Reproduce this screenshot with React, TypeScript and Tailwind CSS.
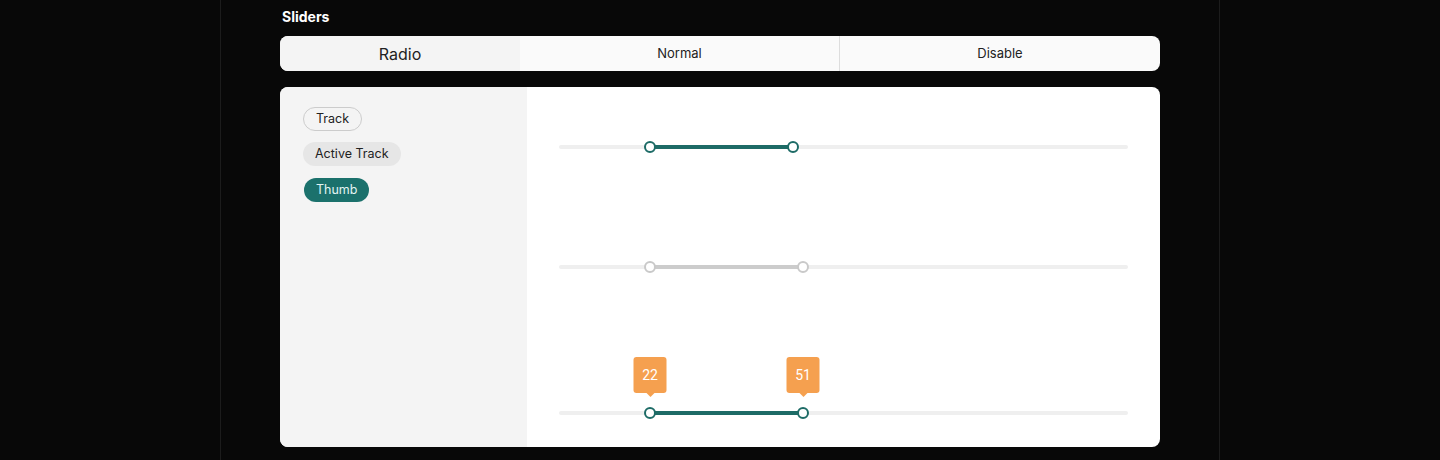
import React from 'react'

const font = { fontFamily: 'Inter, "Noto Sans", sans-serif' }

type Thumb = { pos: string; label?: string }

function Slider({
  from,
  to,
  width,
  disabled,
  labels,
}: {
  from: string
  to: string
  width: string
  disabled?: boolean
  labels?: [string, string]
}) {
  const thumbs: Thumb[] = [
    { pos: from, label: labels?.[0] },
    { pos: to, label: labels?.[1] },
  ]
  return (
    <div className="relative h-1 w-full rounded-full bg-[#efefef]">
      <div
        className={`absolute top-0 h-1 ${disabled ? 'bg-[#cccccc]' : 'bg-[#1d6b66]'}`}
        style={{ left: from, width }}
      />
      {thumbs.map((t, i) => (
        <div key={i} className="absolute top-1/2 -translate-x-1/2 -translate-y-1/2" style={{ left: t.pos }}>
          <div
            className={`h-3 w-3 rounded-full border-2 bg-white ${disabled ? 'border-[#c9c9c9]' : 'border-[#1d6b66]'}`}
          />
          {t.label && (
            <div className="absolute bottom-[22px] left-1/2 -translate-x-1/2">
              <div
                className="flex h-[36px] w-[33px] items-center justify-center rounded-[3px] bg-[#f5a04f] pt-px text-[14px] text-white"
                style={{ fontFamily: 'Roboto, sans-serif' }}
              >
                {t.label}
              </div>
              <div className="mx-auto h-0 w-0 border-x-[4px] border-t-[4px] border-x-transparent border-t-[#f5a04f]" />
            </div>
          )}
        </div>
      ))}
    </div>
  )
}

export default function App() {
  return (
    <div className="min-h-[460px] w-full bg-[#080808]" style={font}>
      <div className="mx-auto min-h-[460px] w-[1000px] border-x border-[#1c1c1c] px-[59px] pt-[7px]">
        <h2 className="ml-[2px] h-5 text-[14px] font-bold leading-5 text-white">Sliders</h2>

        {/* tabs */}
        <div className="mt-[9px] flex h-[35px] overflow-hidden rounded-lg bg-[#fafafa]">
          <div className="flex w-[240px] items-center justify-center bg-[#f4f4f4] text-[16px] text-[#222]">Radio</div>
          <div className="flex w-[320px] items-center justify-center border-r border-[#dddddd] text-[13px] text-[#222]">
            Normal
          </div>
          <div className="flex flex-1 items-center justify-center text-[13px] text-[#222]">Disable</div>
        </div>

        {/* card */}
        <div className="mt-4 flex h-[360px] overflow-hidden rounded-lg bg-white">
          <div className="flex w-[247px] flex-col items-start gap-[11px] bg-[#f4f4f4] px-[23px] pt-5">
            <span className="flex h-6 items-center rounded-full border border-[#cccccc] px-3 text-[12.5px] text-[#222]">
              Track
            </span>
            <span className="flex h-6 items-center rounded-full bg-[#e6e6e6] px-3 text-[12.5px] text-[#222]">
              Active Track
            </span>
            <span className="ml-px mt-px flex h-6 items-center rounded-full bg-[#1b716c] px-3 text-[12.5px] text-[#e3f4f2]">
              Thumb
            </span>
          </div>

          <div className="flex flex-1 flex-col px-8">
            <div className="flex h-[120px] items-center">
              <Slider from="16%" to="41.1%" width="25.1%" />
            </div>
            <div className="flex h-[120px] items-center">
              <Slider from="16%" to="42.9%" width="26.9%" disabled />
            </div>
            <div className="flex h-[120px] flex-col justify-end pb-[32px]">
              <Slider from="16%" to="42.9%" width="26.9%" labels={['22', '51']} />
            </div>
          </div>
        </div>
      </div>
    </div>
  )
}
